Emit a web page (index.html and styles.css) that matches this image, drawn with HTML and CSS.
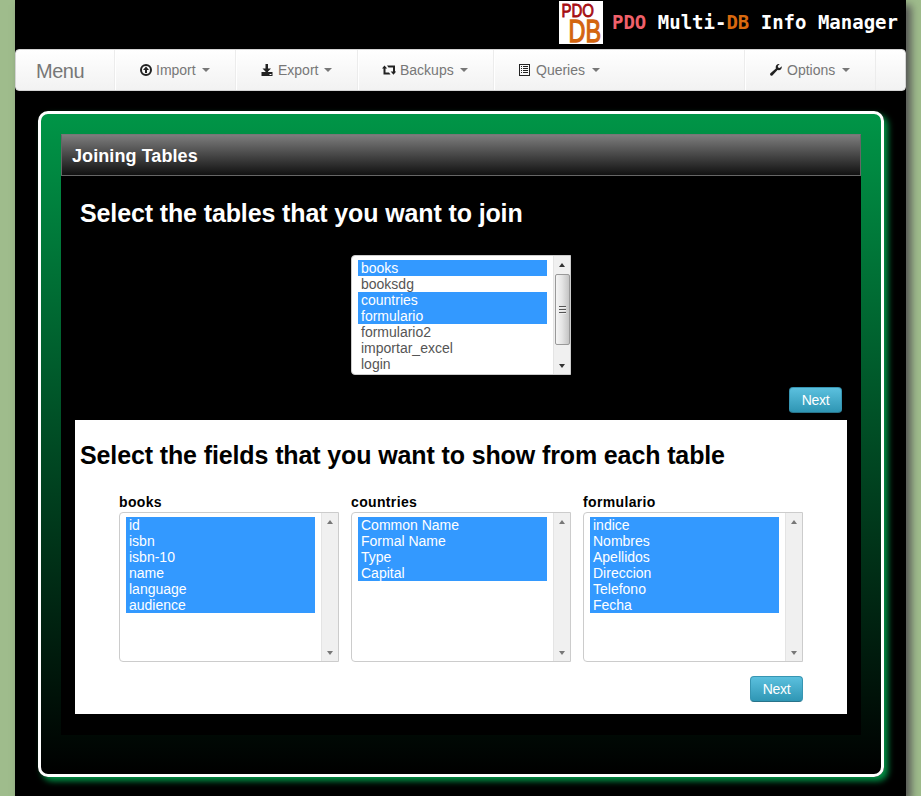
FILE: index.html
```html
<!DOCTYPE html>
<html lang="en">
<head>
<meta charset="utf-8">
<title>PDO Multi-DB Info Manager</title>
<link rel="stylesheet" href="styles.css">
</head>
<body>
<div class="page">
  <header class="masthead">
    <svg class="logo" viewBox="0 0 44 43" width="44" height="43">
      <rect width="44" height="43" fill="#fff"/>
      <text class="logo-pdo" x="2.500" y="16" textLength="32.500" lengthAdjust="spacingAndGlyphs">PDO</text>
      <text class="logo-db" x="9.500" y="40.500" textLength="32.500" lengthAdjust="spacingAndGlyphs">DB</text>
    </svg>
    <h1 class="site-title"><span class="red">PDO</span> Multi-<span class="orange">DB</span> Info Manager</h1>
  </header>
  <nav class="navbar">
    <a class="brand">Menu</a>
    <a class="item import"><svg width="14" height="14" viewBox="0 0 14 14"><circle cx="7" cy="7" r="5" fill="none" stroke="#222" stroke-width="2"/><path d="M7 3.600 10 7H8v3H6V7H4z" fill="#222"/></svg><span>Import</span><i class="caret"></i></a>
    <a class="item export"><svg width="14" height="14" viewBox="0 0 14 14"><path d="M5.500 1h2.500v4.500h3L8 8.500V9h4.500v4h-11V9H5.500v-.500L2.500 5.500h3z" fill="#222"/><path d="M9.500 11h2v1h-2z" fill="#fff"/></svg><span>Export</span><i class="caret"></i></a>
    <a class="item backups"><svg width="14" height="14" viewBox="0 0 14 14"><path d="M2.500 2.500 5.200 5.500H3.500V9.500H7l1.500 2H1.500v-6H0zM5 2.500h8v6h1.300l-2.800 3.200L8.700 8.500H11v-4H6.500z" fill="#222"/></svg><span>Backups</span><i class="caret"></i></a>
    <a class="item queries"><svg width="14" height="14" viewBox="0 0 14 14" shape-rendering="crispEdges"><path d="M1 1h11v12H1zM2 2v10h9V2z" fill="#222" fill-rule="evenodd"/><path d="M3 3h1v1H3zM5 3h5v1H5zM3 5h1v1H3zM5 5h5v1H5zM3 7h1v1H3zM5 7h5v1H5zM3 9h1v1H3zM5 9h5v1H5z" fill="#222"/></svg><span>Queries</span><i class="caret"></i></a>
    <a class="item options"><svg width="14" height="14" viewBox="0 0 14 14"><path d="M12.700 3.200 10.800 5 9.100 4.600 8.800 3l1.900-1.900C8.700.4 6.600 1.900 6.700 4.200L6.900 5.400 1.400 10.300C.3 11.500 1.900 13.500 3.400 12.400L8.500 7c2.800.8 4.800-1.400 4.200-3.800z" fill="#222"/></svg><span>Options</span><i class="caret"></i></a>
    <span class="nav-end"></span>
  </nav>

  <main class="frame">
    <section class="panel">
      <h4 class="panel-title">Joining Tables</h4>
      <div class="tables-step">
        <h3>Select the tables that you want to join</h3>
        <div class="listbox tables">
          <ul>
            <li class="on">books</li><li>booksdg</li><li class="on">countries</li><li class="on">formulario</li><li>formulario2</li><li>importar_excel</li><li>login</li>
          </ul>
          <div class="scroll"><i class="up"></i><i class="thumb"></i><i class="down"></i></div>
        </div>
        <div class="actions"><button class="btn">Next</button></div>
      </div>
      <div class="fields-step">
        <h3>Select the fields that you want to show from each table</h3>
        <div class="fields">
          <div class="field">
            <label>books</label>
            <div class="listbox">
              <ul><li class="on">id</li><li class="on">isbn</li><li class="on">isbn-10</li><li class="on">name</li><li class="on">language</li><li class="on">audience</li></ul>
              <div class="scroll idle"><i class="up"></i><i class="down"></i></div>
            </div>
          </div>
          <div class="field">
            <label>countries</label>
            <div class="listbox">
              <ul><li class="on">Common Name</li><li class="on">Formal Name</li><li class="on">Type</li><li class="on">Capital</li></ul>
              <div class="scroll idle"><i class="up"></i><i class="down"></i></div>
            </div>
          </div>
          <div class="field">
            <label>formulario</label>
            <div class="listbox">
              <ul><li class="on">indice</li><li class="on">Nombres</li><li class="on">Apellidos</li><li class="on">Direccion</li><li class="on">Telefono</li><li class="on">Fecha</li></ul>
              <div class="scroll idle"><i class="up"></i><i class="down"></i></div>
            </div>
          </div>
        </div>
        <div class="actions"><button class="btn">Next</button></div>
      </div>
    </section>
  </main>
</div>
</body>
</html>
```
FILE: styles.css
```css
* { box-sizing: border-box; }
body {
  margin: 0;
  height: 796px;
  overflow: hidden;
  background: #9fbc8c;
  font: 14px/20px "Liberation Sans", Arial, sans-serif;
  color: #555;
}
h1, h3, h4, ul { margin: 0; padding: 0; }
.page {
  width: 891px;
  height: 796px;
  margin-left: 15px;
  background: #000;
  box-shadow: 5px 5px 8px #555;
}
.masthead {
  display: flex;
  justify-content: flex-end;
  height: 49px;
  padding: 1px 8px 0 0;
}
.logo { margin-right: 9px; overflow: visible; }
.logo text { font-family: "Liberation Sans", sans-serif; }
.logo .logo-pdo { font-size: 18.5px; fill: #a50e12; stroke: #a50e12; stroke-width: .9px; }
.logo .logo-db { font-size: 32px; fill: #d3650f; stroke: #d3650f; stroke-width: 1.3px; }
.site-title {
  font: bold 19px/42px "DejaVu Sans Mono", monospace;
  white-space: pre;
  color: #fff;
}
.red { color: #f0606a; }
.orange { color: #d9690f; }

.navbar {
  display: flex;
  height: 42px;
  border: 1px solid #d4d4d4;
  border-radius: 4px;
  background: linear-gradient(#fff, #f2f2f2);
  color: #777;
}
.brand { width: 98px; padding-left: 20px; font-size: 20px; line-height: 42px; letter-spacing: -.5px; }
.item {
  display: flex;
  align-items: center;
  padding-left: 24px;
  border-left: 1px solid #ececec;
  box-shadow: inset 1px 0 #fff;
}
.item svg { margin-right: 4px; }
.caret {
  margin-left: 6px;
  border: 4px solid transparent;
  border-top-color: #777;
  border-bottom: 0;
}
.import { width: 121px; }
.import svg { margin-right: 3px; }
.export { width: 122px; }
.backups { width: 136px; }
.queries { width: 251px; }
.options { width: 131px; }
.queries .caret, .options .caret { margin-left: 7px; }
.nav-end { border-left: 1px solid #ececec; }

.frame {
  width: 846px;
  height: 666px;
  margin: 20px 0 0 23px;
  padding: 20px;
  border: 3px solid #fff;
  border-radius: 10px;
  background: linear-gradient(#009547, #000);
  box-shadow: 4px 4px 6px #009547;
}
.panel { width: 800px; height: 601px; background: #000; }
.panel-title {
  height: 42px;
  padding-left: 10px;
  border: 1px solid #666;
  border-top-color: #777;
  background: linear-gradient(#7d7d7d, #111);
  font-size: 18px;
  line-height: 42px;
  letter-spacing: .08px;
  color: #fff;
}
h3 { font-size: 25px; line-height: 40px; letter-spacing: -.12px; white-space: nowrap; }
.tables-step { height: 244px; padding: 17px 19px 0; color: #fff; }
.listbox {
  display: flex;
  width: 220px;
  height: 150px;
  padding-left: 6px;
  border: 1px solid #ccc;
  border-radius: 4px 0 0 4px;
  background: #fff;
  color: #555;
}
.listbox ul { flex: 0 0 189px; margin: 4px 6px 0 0; list-style: none; }
.listbox li { height: 16px; padding-left: 3px; line-height: 16px; }
.listbox .on { background: #39f; color: #fff; }
.tables { height: 120px; margin: 22px 0 0 271px; }
.scroll {
  display: flex;
  flex-direction: column;
  align-items: center;
  width: 17px;
  padding: 7px 0 6px;
  border-left: 1px solid #e4e4e4;
  background: #f0f0f0;
}
.up, .down { border: 3.5px solid transparent; }
.up { border-top: 0; border-bottom: 4px solid #333; }
.down { margin-top: auto; border-bottom: 0; border-top: 4px solid #333; }
.idle .up { border-bottom-color: #777; }
.idle .down { border-top-color: #777; }
.thumb {
  display: flex;
  width: 15px;
  height: 71px;
  margin-top: 7px;
  border: 1px solid #999;
  border-radius: 2px;
  background: linear-gradient(90deg, #f5f5f5, #e5e5e5 45%, #c4c4c4);
}
.thumb::before {
  content: "";
  width: 7px;
  height: 8px;
  margin: auto;
  background: repeating-linear-gradient(#555 0 1px, #eee 1px 2px, transparent 2px 3px);
}
.actions { display: flex; justify-content: flex-end; }
.tables-step .actions { margin-top: 12px; }
.btn {
  width: 53px;
  height: 26px;
  padding: 0;
  border: 1px solid #2f96b4;
  border-color: #3795b2 #3795b2 #28738a;
  border-radius: 4px;
  background: linear-gradient(#5bc0de, #2f96b4);
  font: 14px/22px "Liberation Sans", Arial, sans-serif;
  letter-spacing: -.3px;
  color: #fff;
}
.fields-step {
  width: 772px;
  height: 294px;
  margin-left: 14px;
  padding: 15px 44px 0;
  background: #fff;
  color: #000;
}
.fields-step h3 { margin-left: -39px; }
.fields { display: flex; gap: 12px; padding-top: 17px; }
.field label { display: block; height: 20px; font-weight: bold; letter-spacing: .35px; }
.fields-step .actions { margin-top: 14px; }
```
